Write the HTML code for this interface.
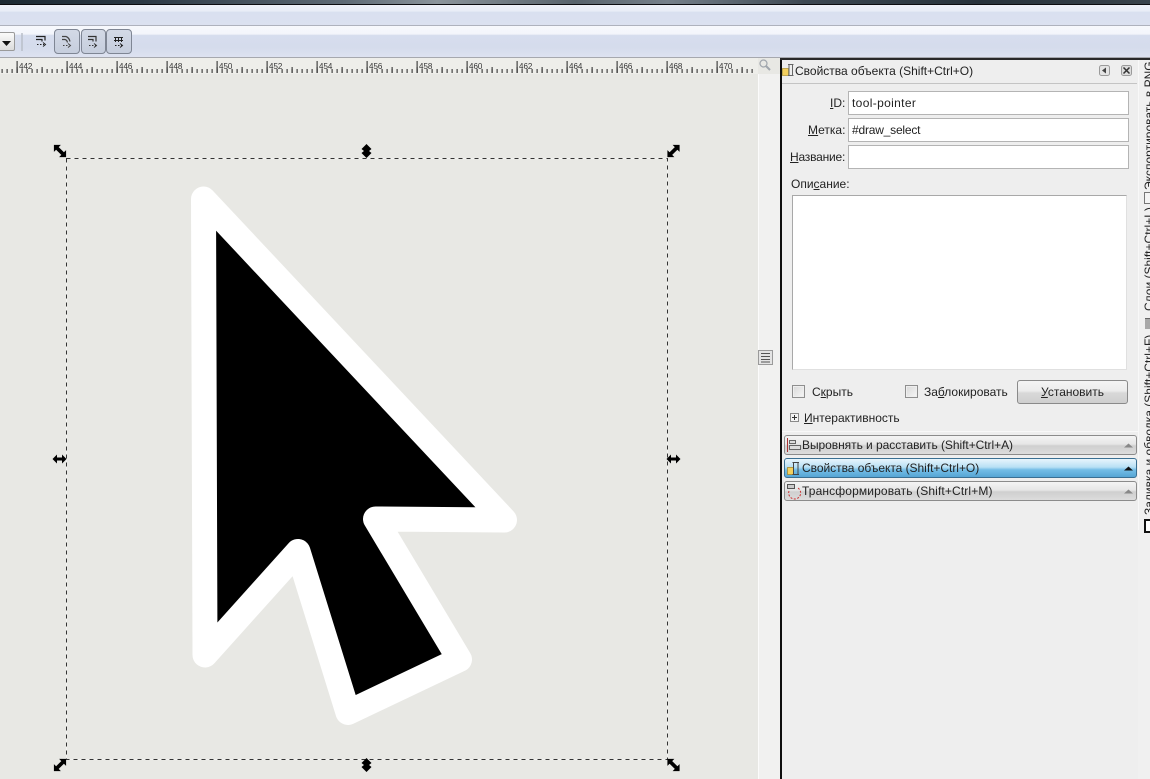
<!DOCTYPE html>
<html lang="ru">
<head>
<meta charset="utf-8">
<title>Inkscape</title>
<style>
html,body{margin:0;padding:0;width:1150px;height:779px;overflow:hidden;background:#e8e8e4}
body{position:relative;font-family:"Liberation Sans",sans-serif;font-size:12px;color:#222}
div,span.a{position:absolute;box-sizing:border-box}
.t{white-space:nowrap;line-height:14px}
.input{background:#fff;border:1px solid #b4b4b4;left:848px;width:281px;height:24px;padding:3px 0 0 3px;line-height:16px;white-space:nowrap}
.chk{width:13px;height:13px;border:1px solid #8e8e8e;background:linear-gradient(135deg,#d8d8d8,#f6f6f6);box-shadow:inset 0 0 0 1px #eee}
.tb{top:29px;height:25px;border:1px solid #7f8694;border-radius:4px;background:linear-gradient(#d3d9e6,#c6cedd)}
.bar{left:784px;width:353px;height:20px;border:1px solid #8b8b8b;border-radius:3px;background:linear-gradient(#f4f4f4 0,#e6e6e6 45%,#cfcfcf 55%,#dcdcdc 100%);padding:2px 0 0 17px;line-height:14px;white-space:nowrap}
.bar.on{border-color:#3a6f92;background:linear-gradient(#e8f5fc 0,#b9e0f5 45%,#74bde6 60%,#56a5d4 100%)}
.v{transform-origin:0 0;transform:rotate(-90deg);white-space:nowrap;line-height:14px;color:#222}
svg{position:absolute;overflow:visible}
</style>
</head>
<body>

<!-- Top strip -->
<div style="left:0;top:0;width:1150px;height:4px;background:linear-gradient(90deg,#1d2a33 0,#2b3844 12%,#5e6a75 30%,#8b949b 38%,#58636c 50%,#76808a 58%,#3d4852 70%,#27323b 85%,#39434c 100%)"></div>
<div style="left:0;top:4px;width:1150px;height:1px;background:#0c0c10"></div>
<div style="left:0;top:5px;width:1150px;height:20px;background:linear-gradient(#eef1f9 0,#e9edf7 30%,#d9e0f0 36%,#dbe1f0 100%)"></div>
<div style="left:0;top:25px;width:1150px;height:1px;background:#aeb2bd"></div>
<div style="left:0;top:26px;width:1150px;height:31px;background:linear-gradient(#f7f9fd 0,#f3f5fb 26%,#d6ddee 30%,#d5dcec 70%,#dde2f0 100%)"></div>
<div style="left:0;top:57px;width:1150px;height:1px;background:#a6a8ae"></div>

<!-- Toolbar -->
<div style="left:-6px;top:32px;width:21px;height:19px;border:1px solid #9a9a9a;border-radius:2px;background:linear-gradient(#fafafa,#dcdcdc)"></div>
<svg style="left:0;top:0" width="140" height="58">
  <path d="M2 41h9l-4.500 5z" fill="#111"/>
  <path d="M22 33v18" stroke="#b9bec8" stroke-width="1.500"/>
</svg>
<div class="tb" style="left:54px;width:26px"></div>
<div class="tb" style="left:81px;width:25px"></div>
<div class="tb" style="left:106px;width:26px"></div>
<svg style="left:0;top:0" width="140" height="58" fill="none" stroke="#222" stroke-width="1">
  <path d="M36 36.500h9v4M36 39.500h6v2" stroke-width="1.200"/>
  <path d="M37 44.500h7" stroke-dasharray="1.500 1.500"/>
  <path d="M43 42.500l2.500 2-2.500 2" />
  <path d="M62 36.500h4q3 1 4 5M62 39.500h3q2 .5 2.500 3" stroke="#444" stroke-width="1.200"/>
  <path d="M63 45.500h6" stroke="#444" stroke-dasharray="1.500 1.500"/>
  <path d="M68 43.500l2.500 2-2.500 2" stroke="#444"/>
  <path d="M88 36.500h8v5M88 39.500h5v2" stroke="#333" stroke-width="1.200"/>
  <path d="M89 45.500h7" stroke="#333" stroke-dasharray="1.500 1.500"/>
  <path d="M94 43.500l2.500 2-2.500 2" stroke="#333"/>
  <path d="M114 37.500h9M114 40.500h9M115.500 37v5M118.500 37v5M121.500 37v5" stroke="#222"/>
  <path d="M115 45.500h7" stroke="#222" stroke-dasharray="1.500 1.500"/>
  <path d="M120 43.500l2.500 2-2.500 2" stroke="#222"/>
</svg>

<!-- Ruler -->
<div style="left:0;top:58px;width:758px;height:16px;background:#eeeeea"></div>
<svg style="left:0;top:58px" width="760" height="16" font-family="Liberation Sans, sans-serif" font-size="8" fill="#333">
  <defs>
    <pattern id="minor" x="1.600" y="0" width="5" height="16" patternUnits="userSpaceOnUse">
      <rect x="0" y="11" width="1" height="4" fill="#222"/>
    </pattern>
    <pattern id="mid" x="16.600" y="0" width="25" height="16" patternUnits="userSpaceOnUse">
      <rect x="0" y="9" width="1" height="6" fill="#222"/>
    </pattern>
    <pattern id="major" x="16.600" y="0" width="50" height="16" patternUnits="userSpaceOnUse">
      <rect x="0" y="3" width="1" height="12" fill="#222"/>
    </pattern>
  </defs>
  <rect width="755" height="16" fill="url(#minor)"/>
  <rect width="755" height="16" fill="url(#mid)"/>
  <rect width="755" height="16" fill="url(#major)"/>
  <text x="19" y="11">442</text><text x="69" y="11">444</text><text x="119" y="11">446</text><text x="169" y="11">448</text>
  <text x="219" y="11">450</text><text x="269" y="11">452</text><text x="319" y="11">454</text><text x="369" y="11">456</text>
  <text x="419" y="11">458</text><text x="469" y="11">460</text><text x="519" y="11">462</text><text x="569" y="11">464</text>
  <text x="619" y="11">466</text><text x="669" y="11">468</text><text x="719" y="11">470</text>
</svg>
<svg style="left:758px;top:58px" width="16" height="16" fill="none" stroke="#a0a6ad">
  <circle cx="5.500" cy="5.500" r="3.500" stroke-width="1.200"/><path d="M8 8l4 4" stroke-width="2"/>
</svg>

<!-- Canvas scroll column -->
<div style="left:758px;top:74px;width:22px;height:705px;background:#f1f1f0"></div>
<div style="left:758px;top:74px;width:1px;height:705px;background:#fbfbfb"></div>
<div style="left:758px;top:350px;width:15px;height:15px;background:#e4e4e4;border:1px solid #9a9a9a"></div>
<svg style="left:758px;top:350px" width="15" height="15" stroke="#555" stroke-width="1">
  <path d="M3 3.500h9M3 6.500h9M3 9.500h9M3 12h9"/>
</svg>

<!-- Canvas artwork -->
<svg style="left:0;top:0" width="780" height="779">
  <rect x="66.500" y="158.500" width="601" height="601" fill="none" stroke="#f4f4f2" stroke-width="1"/>
  <rect x="66.500" y="158.500" width="601" height="601" fill="none" stroke="#333" stroke-width="1" stroke-dasharray="4 4"/>
  <path d="M203.500 199 L504.500 520 L375.500 519 L459.500 659.500 L348 712.500 L298 551.500 L205 655 Z" fill="#000" stroke="#fff" stroke-width="25" stroke-linejoin="round"/>
  <g fill="#000">
    <path transform="translate(60 151) scale(.87)" d="M-7-7H1L-1.500-4.500 4.500 1.500 7-1V7H-1L1.500 4.500-4.500-1.500-7 1Z"/>
    <path transform="translate(673.500 151) scale(-.87 .87)" d="M-7-7H1L-1.500-4.500 4.500 1.500 7-1V7H-1L1.500 4.500-4.500-1.500-7 1Z"/>
    <path transform="translate(60 765) scale(-.87 .87)" d="M-7-7H1L-1.500-4.500 4.500 1.500 7-1V7H-1L1.500 4.500-4.500-1.500-7 1Z"/>
    <path transform="translate(673.500 765) scale(.87)" d="M-7-7H1L-1.500-4.500 4.500 1.500 7-1V7H-1L1.500 4.500-4.500-1.500-7 1Z"/>
    <path transform="translate(366.500 151)" d="M0-7 5-2 2.500 0 5 2 0 7-5 2-2.500 0-5-2Z"/>
    <path transform="translate(366.500 765)" d="M0-7 5-2 2.500 0 5 2 0 7-5 2-2.500 0-5-2Z"/>
    <path transform="translate(59.500 459) rotate(90)" d="M0-7 4.500-2.500 1.500-2.500 1.500 2.500 4.500 2.500 0 7-4.500 2.500-1.500 2.500-1.500-2.500-4.500-2.500Z"/>
    <path transform="translate(673.500 459) rotate(90)" d="M0-7 4.500-2.500 1.500-2.500 1.500 2.500 4.500 2.500 0 7-4.500 2.500-1.500 2.500-1.500-2.500-4.500-2.500Z"/>
  </g>
</svg>

<!-- Panel -->
<div style="left:780px;top:58px;width:370px;height:721px;background:#eeeeee"></div>
<div style="left:780px;top:58px;width:2px;height:721px;background:#0e0e0e"></div>
<div style="left:780px;top:58px;width:370px;height:2px;background:#2a2a2a"></div>
<div style="left:1138px;top:60px;width:12px;height:719px;background:#f0f0f0"></div>

<!-- Panel title -->
<svg style="left:782px;top:63px" width="14" height="15">
  <rect x=".5" y="5.500" width="6" height="7" fill="#f3cf5e" stroke="#b59a3c" stroke-width=".8"/>
  <path d="M6 1.500h5.500M6 12.500h5.500M7 2v10M10.500 2v10" stroke="#666" fill="none"/>
</svg>
<div class="t" style="left:795px;top:64px">Свойства объекта (Shift+Ctrl+O)</div>
<svg style="left:1098px;top:64px" width="36" height="14">
  <rect x="1.500" y="1.500" width="10" height="10" rx="2" fill="#e4e4e4" stroke="#9a9a9a"/>
  <path d="M8 3.500v6l-4-3z" fill="#444"/>
  <rect x="23.500" y="1.500" width="10" height="10" rx="2" fill="#dcdcdc" stroke="#9a9a9a"/>
  <path d="M25.500 3.500l6 6M31.500 3.500l-6 6" stroke="#333" stroke-width="1.500"/>
</svg>
<div style="left:782px;top:83px;width:355px;height:1px;background:#c4c4c4"></div>

<!-- Form -->
<div class="t" style="left:830px;top:96px"><u>I</u>D:</div>
<div class="input" style="top:91px;letter-spacing:.35px">tool-pointer</div>
<div class="t" style="left:808px;top:123px"><u>М</u>етка:</div>
<div class="input" style="top:118px;letter-spacing:-.2px">#draw_select</div>
<div class="t" style="left:790px;top:150px;letter-spacing:-.2px"><u>Н</u>азвание:</div>
<div class="input" style="top:145px"></div>
<div class="t" style="left:791px;top:177px">Опи<u>с</u>ание:</div>
<div style="left:792px;top:195px;width:335px;height:175px;background:#fff;border:1px solid #a8a8a8;border-bottom-color:#e0e0e0;border-right-color:#e0e0e0"></div>

<div class="chk" style="left:792px;top:385px"></div>
<div class="t" style="left:812px;top:385px">С<u>к</u>рыть</div>
<div class="chk" style="left:905px;top:385px"></div>
<div class="t" style="left:924px;top:385px">За<u>б</u>локировать</div>
<div class="t" style="left:1017px;top:380px;width:111px;height:24px;border:1px solid #8a8a8a;border-radius:3px;background:linear-gradient(#f4f4f4 0,#ececec 45%,#d8d8d8 55%,#cfcfcf 100%);text-align:center;line-height:22px"><u>У</u>становить</div>

<svg style="left:790px;top:413px" width="10" height="10">
  <rect x=".5" y=".5" width="8" height="8" fill="#f4f4f4" stroke="#8a8a8a"/>
  <path d="M2 4.500h5M4.500 2v5" stroke="#333"/>
</svg>
<div class="t" style="left:804px;top:411px"><u>И</u>нтерактивность</div>

<!-- Collapsed panel bars -->
<div style="left:782px;top:431px;width:356px;height:1px;background:#f8f8f8"></div>
<div class="bar" style="top:435px;letter-spacing:-.05px">Выровнять и расставить (Shift+Ctrl+A)</div>
<div class="bar on" style="top:458px;letter-spacing:-.03px">Свойства объекта (Shift+Ctrl+O)</div>
<div class="bar" style="top:481px;letter-spacing:.13px">Трансформировать (Shift+Ctrl+M)</div>
<svg style="left:784px;top:435px" width="354" height="66">
  <path d="M3.500 3v14" stroke="#a33"/>
  <path d="M5.500 5.500h6v3h-6zM5.500 10.500h11v4h-11z" fill="#ddd" stroke="#666"/>
  <rect x="3.500" y="32.500" width="6" height="7" fill="#f3cf5e" stroke="#a58a30" stroke-width=".8"/>
  <path d="M8.500 27.500h6.500M8.500 39.500h6.500M9.500 28v11M14 28v11" stroke="#444" fill="none"/>
  <path d="M3.500 49.500h7v4h-7z" fill="#ccc" stroke="#555"/>
  <path d="M5 56a6 6 0 1 0 9-3" fill="none" stroke="#c33" stroke-dasharray="2 1.500"/>
  <path d="M340 12.500h9l-4.500-4z" fill="#888"/>
  <path d="M340 35.500h9l-4.500-4z" fill="#111"/>
  <path d="M340 58.500h9l-4.500-4z" fill="#888"/>
</svg>

<!-- Vertical dock tabs -->
<div style="left:1138px;top:60px;width:12px;height:719px;overflow:hidden">
  <div class="v" style="left:4px;top:130px">Экспортировать в PNG (Shift+Ctrl+E)</div>
  <div class="v" style="left:4px;top:251px">Слои (Shift+Ctrl+L)</div>
  <div class="v" style="left:4px;top:455px">Заливка и обводка (Shift+Ctrl+F)</div>
</div>
<div style="left:1144px;top:192px;width:6px;height:12px;background:#f4f4f4;border:1px solid #777;border-right:0"></div>
<div style="left:1145px;top:318px;width:5px;height:11px;background:#a8a8a8;border-top:1px solid #666"></div>
<div style="left:1144px;top:519px;width:6px;height:14px;background:#fff;border:2px solid #111;border-right:0"></div>
<div style="left:1138px;top:60px;width:1px;height:470px;background:#f8f8f8"></div>
</body>
</html>
